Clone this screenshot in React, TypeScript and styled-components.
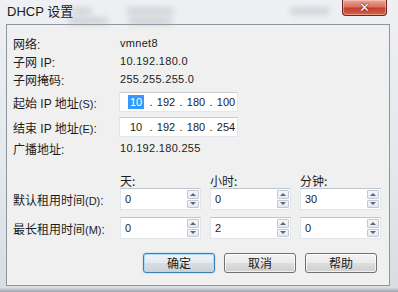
import React, { FC } from "react"
import styled, { createGlobalStyle, css } from "styled-components"

const GlobalStyle = createGlobalStyle`
  html, body {
    margin: 0;
    padding: 0;
    background: #e6e9ed;
  }
  body {
    font-family: "Liberation Sans", "Noto Sans CJK SC", sans-serif;
  }
`

const Window = styled.div`
  position: relative;
  width: 398px;
  height: 292px;
  overflow: hidden;
  display: flex;
  flex-direction: column;
  background: linear-gradient(180deg, #eef0f3 0%, #e4e7eb 60%, #d9dde2 100%);
`

const Smudge = styled.span<{ $x: number; $w: number; $y: number }>`
  position: absolute;
  top: ${(p) => p.$y}px;
  left: ${(p) => p.$x}px;
  width: ${(p) => p.$w}px;
  height: 6px;
  border-radius: 3px;
  background: #9ea3aa;
  opacity: 0.45;
  filter: blur(3px);
`

const TitleBar = styled.div`
  position: relative;
  height: 24px;
  flex: none;
  display: flex;
  align-items: flex-start;
  justify-content: space-between;
`

const Title = styled.span`
  margin: 4px 0 0 7px;
  font-size: 13px;
  line-height: 16px;
  color: #1a1a1a;
  font-family: "Liberation Sans", "Noto Sans CJK SC", sans-serif;
`

const CloseButton = styled.div`
  width: 45px;
  height: 16px;
  margin-right: 11px;
  box-sizing: border-box;
  border: 1px solid #6b2620;
  border-top: none;
  border-radius: 0 0 4px 4px;
  background: linear-gradient(180deg, #eaa99a 0%, #d9705e 45%, #c4402c 55%, #d4644a 100%);
  box-shadow: inset 0 0 0 1px rgba(255, 210, 200, 0.5);
  display: flex;
  align-items: center;
  justify-content: center;
  color: #fff;
  font-size: 13px;
  font-weight: bold;
  line-height: 14px;
  font-family: "DejaVu Sans", sans-serif;
  text-shadow: 0 0 2px #5a1a12, 0 0 1px #5a1a12;
`

const Client = styled.div`
  margin: 0 8px 0 6px;
  height: 262px;
  box-sizing: border-box;
  border: 1px solid #8d959e;
  background: #f0f0f0;
  padding: 9px 0 0 6px;
  display: flex;
  flex-direction: column;
`

const BottomEdge = styled.div`
  flex: 1;
  margin: 1px 0 0;
  background: linear-gradient(180deg, #e2e5e9 0%, #b8bdc4 60%, #9da3ab 100%);
`

const Row = styled.div<{ $h: number; $mt?: number }>`
  height: ${(p) => p.$h}px;
  margin-top: ${(p) => p.$mt ?? 0}px;
  display: grid;
  grid-template-columns: 98px 81px 81px 81px;
  column-gap: 9px;
  align-items: center;
`

const Label = styled.span`
  font-size: 12px;
  color: #1c1c1c;
  white-space: nowrap;
  font-family: "Liberation Sans", "Noto Sans CJK SC", sans-serif;
`

const Key = styled.span`
  font-size: 11px;
`

const Value = styled.span`
  grid-column: 2 / 5;
  font-size: 11px;
  color: #1c1c1c;
  letter-spacing: 0.3px;
`

const IpBox = styled.div`
  grid-column: 2 / 5;
  margin-left: -1px;
  width: 119px;
  height: 20px;
  box-sizing: border-box;
  background: #fff;
  border: 1px solid #e2e6ea;
  border-top-color: #c9ced4;
  padding-left: 5px;
  display: flex;
  align-items: center;
  font-size: 11px;
  color: #1c1c1c;
`

const Octet = styled.span`
  width: 22px;
  text-align: center;
`

const Selected = styled.span`
  background: #3399ff;
  color: #fff;
  padding: 1px 2px;
`

const Dot = styled.span`
  width: 8px;
  text-align: center;
`

const UnitLabel = styled.span`
  font-size: 12px;
  color: #1c1c1c;
  font-family: "Noto Sans CJK SC", sans-serif;
`

const SpinBox = styled.div`
  height: 22px;
  box-sizing: border-box;
  background: #fff;
  border: 1px solid #e2e6ea;
  border-top-color: #bfc5cc;
  display: flex;
  align-items: center;
  justify-content: space-between;
  padding: 1px 1px 1px 4px;
  font-size: 11px;
  color: #1c1c1c;
`

const SpinButtons = styled.div`
  width: 12px;
  align-self: stretch;
  display: flex;
  flex-direction: column;
  gap: 1px;
`

const SpinHalf = styled.div<{ $down?: boolean }>`
  flex: 1;
  box-sizing: border-box;
  border: 1px solid #c3c9d3;
  border-radius: 1px;
  background: linear-gradient(180deg, #f7f7f8 0%, #e6e8ec 100%);
  display: flex;
  align-items: center;
  justify-content: center;

  &::after {
    content: "";
    width: 0;
    height: 0;
    border-left: 3px solid transparent;
    border-right: 3px solid transparent;
    ${(p) =>
      p.$down
        ? css`
            border-top: 3px solid #55678a;
          `
        : css`
            border-bottom: 3px solid #55678a;
          `}
  }
`

const ButtonRow = styled.div`
  margin-top: 14px;
  height: 20px;
  display: flex;
  justify-content: flex-end;
  gap: 9px;
  padding-right: 12px;
`

const Button = styled.button<{ $default?: boolean }>`
  width: 72px;
  height: 20px;
  padding: 0;
  border: 1px solid #707070;
  border-radius: 3px;
  background: linear-gradient(180deg, #f3f3f3 0%, #ebebeb 48%, #dddddd 52%, #cfcfcf 100%);
  box-shadow: inset 0 0 0 1px rgba(255, 255, 255, 0.7);
  font-size: 12px;
  color: #1a1a1a;
  font-family: "Noto Sans CJK SC", sans-serif;
  line-height: 16px;

  ${(p) =>
    p.$default &&
    css`
      border-color: #3c7fb1;
      box-shadow: inset 0 0 0 1px #a6dcf5, 0 0 2px rgba(60, 127, 177, 0.4);
      background: linear-gradient(180deg, #eef3f6 0%, #e4ebf0 48%, #d6dde3 52%, #cbd3da 100%);
    `}
`

const Spin: FC<{ value: string }> = ({ value }) => (
  <SpinBox>
    <span>{value}</span>
    <SpinButtons>
      <SpinHalf />
      <SpinHalf $down />
    </SpinButtons>
  </SpinBox>
)

const App: FC = () => {
  return (
    <Window>
      <GlobalStyle />
      <Smudge $x={72} $w={20} $y={8} />
      <Smudge $x={126} $w={48} $y={8} />
      <Smudge $x={290} $w={40} $y={8} />
      <Smudge $x={68} $w={40} $y={18} />
      <Smudge $x={128} $w={44} $y={18} />
      <TitleBar>
        <Title>DHCP 设置</Title>
        <CloseButton>✕</CloseButton>
      </TitleBar>
      <Client>
        <Row $h={18}>
          <Label>网络:</Label>
          <Value>vmnet8</Value>
        </Row>
        <Row $h={18}>
          <Label>子网 IP:</Label>
          <Value>10.192.180.0</Value>
        </Row>
        <Row $h={18}>
          <Label>子网掩码:</Label>
          <Value>255.255.255.0</Value>
        </Row>
        <Row $h={20} $mt={4}>
          <Label>
            起始 IP 地址<Key>(S)</Key>:
          </Label>
          <IpBox>
            <Octet>
              <Selected>10</Selected>
            </Octet>
            <Dot>.</Dot>
            <Octet>192</Octet>
            <Dot>.</Dot>
            <Octet>180</Octet>
            <Dot>.</Dot>
            <Octet>100</Octet>
          </IpBox>
        </Row>
        <Row $h={20} $mt={5}>
          <Label>
            结束 IP 地址<Key>(E)</Key>:
          </Label>
          <IpBox>
            <Octet>10</Octet>
            <Dot>.</Dot>
            <Octet>192</Octet>
            <Dot>.</Dot>
            <Octet>180</Octet>
            <Dot>.</Dot>
            <Octet>254</Octet>
          </IpBox>
        </Row>
        <Row $h={18} $mt={2}>
          <Label>广播地址:</Label>
          <Value>10.192.180.255</Value>
        </Row>
        <Row $h={16} $mt={15}>
          <span />
          <UnitLabel>天:</UnitLabel>
          <UnitLabel>小时:</UnitLabel>
          <UnitLabel>分钟:</UnitLabel>
        </Row>
        <Row $h={22}>
          <Label>
            默认租用时间<Key>(D)</Key>:
          </Label>
          <Spin value="0" />
          <Spin value="0" />
          <Spin value="30" />
        </Row>
        <Row $h={22} $mt={7}>
          <Label>
            最长租用时间<Key>(M)</Key>:
          </Label>
          <Spin value="0" />
          <Spin value="2" />
          <Spin value="0" />
        </Row>
        <ButtonRow>
          <Button $default>确定</Button>
          <Button>取消</Button>
          <Button>帮助</Button>
        </ButtonRow>
      </Client>
      <BottomEdge />
    </Window>
  )
}

export default App
